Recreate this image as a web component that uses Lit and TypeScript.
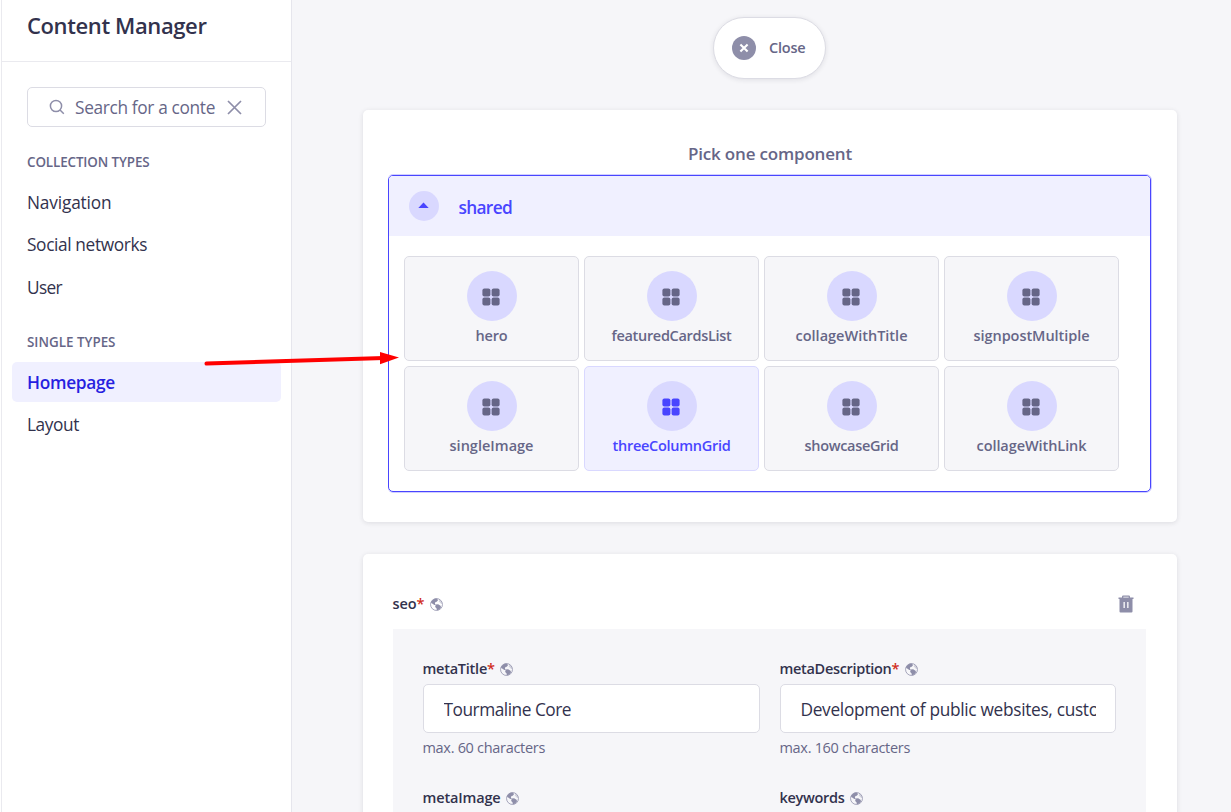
import { LitElement, html, css, svg } from "lit";
import { customElement, property } from "lit/decorators.js";
import { classMap } from "lit/directives/class-map.js";

/** A single line of text whose tracking is adjusted to a given advance width. */
@customElement("fit-text")
class FitText extends LitElement {
  @property() text = "";
  @property({ type: Number }) width = 0;
  static styles = css`
    :host { display: inline-block; white-space: pre; }
  `;
  render() {
    return html`<span>${this.text}</span>`;
  }
  updated() {
    const span = this.renderRoot.querySelector("span") as HTMLElement;
    span.style.letterSpacing = "0px";
    if (!this.width) return;
    const natural = span.getBoundingClientRect().width;
    span.style.letterSpacing = `${(this.width - natural) / this.text.length}px`;
  }
}

const t = (text: string, width: number) => html`<fit-text .text=${text} .width=${width}></fit-text>`;

const gridIcon = svg`<svg class="grid-icon" viewBox="0 0 18 18">
  <rect x="0.4" y="0.4" width="8" height="8" rx="2"/><rect x="9.6" y="0.4" width="8" height="8" rx="2"/>
  <rect x="0.4" y="9.6" width="8" height="8" rx="2"/><rect x="9.6" y="9.6" width="8" height="8" rx="2"/></svg>`;

const globe = html`<svg class="globe" viewBox="0 0 24 24">
  <circle cx="12" cy="12" r="11" fill="none" stroke="#8e8ea9" stroke-width="1.7" stroke-opacity="0.85"/>
  <path d="M2 7.500C4 3 8 .8 12 .8L15 3.500L12.500 7L10 7.500L9 10.500L11 12.500L8 13L2 8.800Z"/>
  <path d="M10.500 12L15 11.500L19.500 14.500L20.500 17L17 21L12.500 23L12 19L9.500 16.500Z"/>
  <path d="M17.500 2.500L22 7L22.500 11L19 9.500L16.500 6Z" opacity="0.35"/>
</svg>`;

const NAV = [
  { title: ["COLLECTION TYPES", 122.5], items: [["Navigation", 84.5], ["Social networks", 120], ["User", 35]] },
  { title: ["SINGLE TYPES", 88.5], items: [["Homepage", 88], ["Layout", 52]] },
] as { title: [string, number]; items: [string, number][] }[];

const TILES: [string, number][] = [
  ["hero", 32], ["featuredCardsList", 120], ["collageWithTitle", 112], ["signpostMultiple", 116],
  ["singleImage", 84], ["threeColumnGrid", 118], ["showcaseGrid", 94], ["collageWithLink", 110],
];

@customElement("app-root")
class AppRoot extends LitElement {
  static styles = css`
    :host {
      display: flex; position: relative; width: 1231px; height: 812px; overflow: hidden;
      box-sizing: border-box; background: #f6f6f9; color: #32324d;
      font-family: "Open Sans", "Noto Sans", sans-serif; font-size: 17.3px; line-height: 24px;
    }
    * { box-sizing: border-box; }
    svg { display: block; flex: none; }
    .side { width: 292px; margin: 0; background: #fff; border-right: 1px solid #e6e6ed; display: flex; flex-direction: column; flex: none; }
    .frame { border-left: 1px solid #eaeaef; margin-left: 1px; flex: 1; }
    .head { height: 62px; padding: 10px 25px 0; border-bottom: 1px solid #eaeaef; font-size: 22px; line-height: 30px; font-weight: 600; }
    .search { margin: 25px 25px 0; width: 239px; height: 40px; border: 1px solid #dcdce4; border-radius: 5px;
      display: flex; align-items: center; padding-left: 21px; color: #666687; }
    .search .term { margin-left: 10px; width: 140px; padding-top: 2px; }
    .search .x { margin-left: 12px; }
    .group { padding-top: 23px; }
    .title { height: 24px; margin: 0 0 8px 25px; font-size: 13.4px; font-weight: 600; color: #666687; }
    .items { display: flex; flex-direction: column; gap: 2.5px; margin: 0 10px 0 10px; }
    .item { height: 40px; padding: 2px 15px 0; border-radius: 5px; display: flex; align-items: center; }
    .item:nth-child(2) { padding-top: 1px; }
    .item.on { background: #f0f0ff; color: #271fe0; font-weight: 600; }
    .main { flex: 1; display: flex; flex-direction: column; align-items: center; padding-top: 17px; padding-left: 16px; }
    .close { width: 113px; height: 62px; border: 1px solid #dcdce4; border-radius: 31px; background: #fff; flex: none;
      box-shadow: 0 1px 5px rgba(33,33,52,.1); display: flex; align-items: center; gap: 13px; padding-left: 18px;
      color: #666687; font-size: 14.5px; font-weight: 600; }
    .card { width: 814px; background: #fff; border-radius: 5px; box-shadow: 0 1px 5px rgba(33,33,52,.12); flex: none; }
    .pick { margin-top: 31px; height: 412px; padding: 32px 26px 0 25px; }
    .pick h2 { margin: 0 0 9px; padding-left: 2px; text-align: center; font-size: 17px; line-height: 24px; font-weight: 600; color: #666687; }
    .panel { height: 317px; border: 1px solid #4945ff; border-radius: 5px; overflow: hidden;
      box-shadow: 0 1px 0 #d0cfff, 1px 0 0 #d0cfff, 0 -1px 0 #d0cfff; }
    .bar { height: 60px; background: #f0f0ff; display: flex; align-items: center; padding-left: 20px; gap: 20px; color: #4945ff; font-weight: 600; }
    .toggle { width: 30px; height: 30px; border-radius: 50%; background: #d9d8ff; display: grid; place-items: center; }
    .bar .name { margin-top: 3px; }
    .tiles { display: grid; grid-template-columns: repeat(4, 175px); gap: 5px; padding: 20px 15px; }
    .tile { height: 105px; border: 1px solid #dcdce4; border-radius: 5px; background: #f6f6f9; color: #666687;
      display: flex; flex-direction: column; align-items: center; padding: 14px 0 0 1px; font-size: 14.5px; line-height: 20px; font-weight: 600; }
    .tile.on { background: #f0f0ff; border-color: #d9d8ff; color: #4945ff; }
    .disc { width: 50px; height: 50px; border-radius: 50%; background: #d9d8ff; display: grid; place-items: center; margin-bottom: 5px; padding: 1px 1px 0 0; }
    .grid-icon { width: 18px; height: 18px; fill: currentColor; }
    .form { margin-top: 32px; height: 300px; padding: 38px 31px 0 30px; }
    .row { display: flex; align-items: center; }
    .row.top { height: 24px; margin-bottom: 13px; justify-content: space-between; padding-right: 12px; }
    .label { display: flex; align-items: center; font-size: 14.5px; line-height: 20px; font-weight: 600; }
    .star { color: #d02b20; width: 8px; }
    .globe { width: 13px; height: 13px; fill: #8e8ea9; margin-left: 5px; }
    .fields { background: #f6f6f9; padding: 30px; height: 230px; display: grid; grid-template-columns: 337px 336px; column-gap: 20px; align-content: start; row-gap: 30px; }
    .input { height: 49px; margin-top: 5px; background: #fff; border: 1px solid #dcdce4; border-radius: 5px; padding: 0 19px 0 20px; display: flex; align-items: center; }
    .clip { overflow: hidden; white-space: nowrap; flex: 1; margin-top: 2px; }
    .hint { margin-top: 5px; font-size: 14.5px; line-height: 20px; color: #666687; }
    .arrow { position: absolute; left: 200px; top: 345px; }
  `;

  label(name: string, width: number, required = false) {
    return html`<div class="label">${t(name, width)}${required ? html`<span class="star">*</span>` : ""}${globe}</div>`;
  }

  field(name: string, width: number, required: boolean, value?: [string, number], hint?: [string, number]) {
    return html`<div>
      ${this.label(name, width, required)}
      <div class="input"><div class="clip">${value ? t(...value) : ""}</div></div>
      ${hint ? html`<div class="hint">${t(...hint)}</div>` : ""}
    </div>`;
  }

  render() {
    return html`
      <nav class="side"><div class="frame">
        <div class="head">${t("Content Manager", 179.5)}</div>
        <div class="search">
          <svg width="16" height="16" viewBox="0 0 16 16" fill="none" stroke="#8e8ea9" stroke-width="1.5"><circle cx="7" cy="7" r="5.600"/><path d="M11 11L14.800 14.800"/></svg>
          <div class="term">${t("Search for a conte", 140)}</div>
          <svg class="x" width="15" height="15" viewBox="0 0 15 15" fill="none" stroke="#8e8ea9" stroke-width="1.7"><path d="M1 1L14 14M14 1L1 14"/></svg>
        </div>
        ${NAV.map((g) => html`<div class="group">
          <div class="title">${t(...g.title)}</div>
          <div class="items">${g.items.map((i) => html`<div class=${classMap({ item: true, on: i[0] === "Homepage" })}>${t(...i)}</div>`)}</div>
        </div>`)}
      </div></nav>
      <main class="main">
        <div class="close">
          <svg width="24" height="24" viewBox="0 0 24 24"><circle cx="12" cy="12" r="12" fill="#8e8ea9"/><path d="M8.400 8.400L15.600 15.600M15.600 8.400L8.400 15.600" stroke="#fff" stroke-width="2.1"/></svg>
          ${t("Close", 36.5)}
        </div>
        <section class="card pick">
          <h2>${t("Pick one component", 164)}</h2>
          <div class="panel">
            <div class="bar">
              <div class="toggle"><svg width="11" height="8" viewBox="0 0 11 8"><path d="M0.300 6L5.500 0.500L10.700 6Z" fill="#4945ff"/></svg></div>
              <div class="name">${t("shared", 53.5)}</div>
            </div>
            <div class="tiles">${TILES.map((i) => html`<div class=${classMap({ tile: true, on: i[0] === "threeColumnGrid" })}>
              <div class="disc">${gridIcon}</div>${t(...i)}</div>`)}</div>
          </div>
        </section>
        <section class="card form">
          <div class="row top">
            ${this.label("seo", 24, true)}
            <svg width="16" height="18" viewBox="0 0 16 18"><path fill="#8e8ea9" fill-rule="evenodd" d="M4 2.500V1.700Q4 .5 5.200 .5H10.800Q12 .5 12 1.700V2.500H15.500V4H14.500V16.500Q14.500 17.500 13.500 17.500H2.500Q1.500 17.500 1.500 16.500V4H.5V2.500ZM5.300 2.500H10.700V1.700H5.300ZM5.500 7V13H6.800V7ZM9.200 7V13H10.500V7Z"/></svg>
          </div>
          <div class="fields">
            ${this.field("metaTitle", 64.5, true, ["Tourmaline Core", 127.5], ["max. 60 characters", 122.5])}
            ${this.field("metaDescription", 112, true, ["Development of public websites, custom", 314], ["max. 160 characters", 130.5])}
            ${this.field("metaImage", 78, false)}
            ${this.field("keywords", 65, false)}
          </div>
        </section>
      </main>
      <svg class="arrow" width="204" height="24" viewBox="200 345 204 24"><path d="M206.500 363.600L384 358" stroke="#f00" stroke-width="4" stroke-linecap="round"/><path d="M380 352L399 357.400L380 364.300Z" fill="#f00"/></svg>
    `;
  }
}
